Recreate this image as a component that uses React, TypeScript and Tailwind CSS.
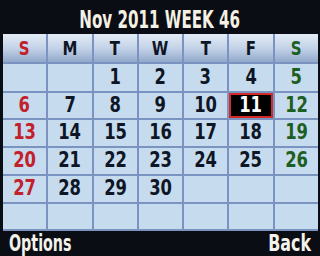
const days = ["S", "M", "T", "W", "T", "F", "S"];

// November 2011 starts on Tuesday
const cells: (number | null)[] = [
  null, null, 1, 2, 3, 4, 5,
  6, 7, 8, 9, 10, 11, 12,
  13, 14, 15, 16, 17, 18, 19,
  20, 21, 22, 23, 24, 25, 26,
  27, 28, 29, 30, null, null, null,
  null, null, null, null, null, null, null,
];

const font = { fontFamily: '"DejaVu Sans", sans-serif' };

function dayColor(i: number) {
  if (i % 7 === 0) return "text-[#c2202a]";
  if (i % 7 === 6) return "text-[#1d5e22]";
  return "text-[#0e1626]";
}

export default function App() {
  return (
    <div className="w-[320px] h-[256px] bg-[#0a0d13] flex flex-col overflow-hidden" style={font}>
      {/* titulo */}
      <div className="h-[34px] flex items-center justify-center text-[#f4f1e4] text-[24px] font-bold leading-none pt-[5px]">
        <span className="inline-block scale-x-[0.63] whitespace-nowrap">Nov 2011 WEEK 46</span>
      </div>

      <div className="ml-[3px] w-[315px] grid grid-cols-7 grid-rows-[28px_27px_25px_26px_26px_26px_25px] gap-[2px] bg-[#7b93c0] pb-[2px]">
        {days.map((d, i) => (
          <div
            key={"h" + i}
            className={`flex items-center justify-center bg-gradient-to-b from-[#e4ecf6] via-[#c3d3e8] to-[#93a9ca] text-[20px] font-bold ${dayColor(i)}`}
          >
            <span className="inline-block scale-x-[0.75]">{d}</span>
          </div>
        ))}
        {cells.map((n, i) =>
          n === 11 ? (
            <div
              key={i}
              className="flex items-center justify-center bg-black border-2 border-[#d42a2a] text-white text-[21px] font-bold"
            >
              <span className="inline-block scale-x-[0.78]">{n}</span>
            </div>
          ) : (
            <div
              key={i}
              className={`flex items-center justify-center bg-[#c7dbee] text-[21px] font-bold ${dayColor(i)}`}
            >
              <span className="inline-block scale-x-[0.78]">{n ?? ""}</span>
            </div>
          )
        )}
      </div>

      {/* rodape */}
      <div className="flex-1 flex items-center justify-between px-[9px] text-[#f4f2ea] text-[23px] font-bold leading-none">
        <span className="inline-block origin-left scale-x-[0.62]">Options</span>
        <span className="inline-block origin-right scale-x-[0.69]">Back</span>
      </div>
    </div>
  );
}
